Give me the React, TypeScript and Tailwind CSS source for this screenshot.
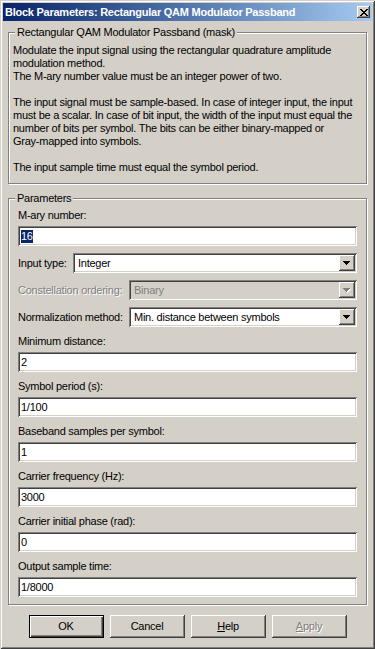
import React from "react";

const raised =
  "shadow-[inset_-1px_-1px_0_#404040,inset_1px_1px_0_#ffffff,inset_-2px_-2px_0_#808080,inset_2px_2px_0_#d4d0c8]";
const sunken =
  "shadow-[inset_1px_1px_0_#808080,inset_-1px_-1px_0_#ffffff,inset_2px_2px_0_#404040,inset_-2px_-2px_0_#d4d0c8]";
const etched = "border border-[#808080] shadow-[inset_1px_1px_0_#ffffff,1px_1px_0_#ffffff]";
const disabledText = "text-[#808080] [text-shadow:1px_1px_0_#ffffff]";

function Arrow({ disabled }: { disabled?: boolean }) {
  const fill = disabled ? "#808080" : "#000000";
  return (
    <svg width="8" height="5" viewBox="0 0 8 5" shapeRendering="crispEdges">
      {disabled && (
        <g fill="#ffffff">
          <rect x="1" y="1" width="7" height="1" />
          <rect x="2" y="2" width="5" height="1" />
          <rect x="3" y="3" width="3" height="1" />
          <rect x="4" y="4" width="1" height="1" />
        </g>
      )}
      <g fill={fill}>
        <rect x="0" y="0" width="7" height="1" />
        <rect x="1" y="1" width="5" height="1" />
        <rect x="2" y="2" width="3" height="1" />
        <rect x="3" y="3" width="1" height="1" />
      </g>
    </svg>
  );
}

function TextField({ value, selected }: { value: string; selected?: boolean }) {
  return (
    <div className={`mt-[4px] h-[20px] bg-white ${sunken} flex items-center pl-[3px]`}>
      {selected ? <span className="bg-[#0a246a] text-white">{value}</span> : <span>{value}</span>}
    </div>
  );
}

function Field({
  label,
  value,
  selected,
  first,
}: {
  label: string;
  value: string;
  selected?: boolean;
  first?: boolean;
}) {
  return (
    <div className={first ? "" : "mt-[7px]"}>
      <div className="h-[14px] flex items-center">{label}</div>
      <TextField value={value} selected={selected} />
    </div>
  );
}

function SelectRow({
  label,
  value,
  width,
  disabled,
}: {
  label: string;
  value: string;
  width: string;
  disabled?: boolean;
}) {
  return (
    <div className="mt-[7px] h-[20px] flex items-center">
      <span className={disabled ? disabledText : ""}>{label}</span>
      <div
        className={`ml-auto ${width} h-[20px] ${disabled ? "bg-[#d4d0c8]" : "bg-white"} ${sunken} flex items-center p-[2px]`}
      >
        <span className={`flex-1 pl-[3px] ${disabled ? "text-[#808080]" : ""}`}>{value}</span>
        <div className={`w-[16px] h-[16px] bg-[#d4d0c8] ${raised} flex items-center justify-center`}>
          <Arrow disabled={disabled} />
        </div>
      </div>
    </div>
  );
}

function Button({ label, def, disabled }: { label: React.ReactNode; def?: boolean; disabled?: boolean }) {
  return (
    <div
      className={`w-[75px] h-[23px] bg-[#d4d0c8] flex items-center justify-center ${
        def ? "border border-black shadow-[inset_1px_1px_0_#ffffff,inset_-1px_-1px_0_#404040,inset_-2px_-2px_0_#808080]" : raised
      } ${disabled ? disabledText : ""}`}
    >
      {label}
    </div>
  );
}

const description = [
  "Modulate the input signal using the rectangular quadrature amplitude",
  "modulation method.",
  "The M-ary number value must be an integer power of two.",
  "",
  "The input signal must be sample-based. In case of integer input, the input",
  "must be a scalar. In case of bit input, the width of the input must equal the",
  "number of bits per symbol. The bits can be either binary-mapped or",
  "Gray-mapped into symbols.",
  "",
  "The input sample time must equal the symbol period.",
];

export default function App() {
  return (
    <div
      className={`w-[375px] h-[649px] bg-[#d4d0c8] p-[3px] flex flex-col text-[11px] leading-[13px] tracking-[-0.25px] text-black font-['Liberation_Sans',Arial,sans-serif] shadow-[inset_1px_1px_0_#d4d0c8,inset_-1px_-1px_0_#404040,inset_2px_2px_0_#ffffff,inset_-2px_-2px_0_#808080]`}
    >
      {/* Title bar */}
      <div className="h-[18px] bg-linear-to-r from-[#0a246a] to-[#a6caf0] flex items-center pl-[2px] pr-[2px]">
        <span className="text-white font-bold text-[11px] tracking-[-0.25px] whitespace-nowrap">
          Block Parameters: Rectangular QAM Modulator Passband
        </span>
        <div className={`ml-auto w-[13px] h-[12px] bg-[#d4d0c8] ${raised} flex items-center justify-center`}>
          <svg width="8" height="7" viewBox="0 0 8 7" shapeRendering="crispEdges">
            <path d="M0 0h2v1H0zM6 0h2v1H6zM1 1h2v1H1zM5 1h2v1H5zM2 2h4v1H2zM3 3h2v1H3zM2 4h4v1H2zM1 5h2v1H1zM5 5h2v1H5zM0 6h2v1H0zM6 6h2v1H6z" fill="#000" />
          </svg>
        </div>
      </div>

      <div className="px-[5px] flex flex-col">
        {/* Description group */}
        <div className={`relative mt-[11px] ${etched} pt-[11px] pb-[9px] pl-[4px]`}>
          <span className="absolute -top-[7px] left-[6px] px-[2px] bg-[#d4d0c8]">
            Rectangular QAM Modulator Passband (mask)
          </span>
          {description.map((line, i) => (
            <div key={i} className="h-[13px] whitespace-nowrap">
              {line}
            </div>
          ))}
        </div>

        {/* Parameters group */}
        <div className={`relative mt-[14px] ${etched} pt-[9px] pb-[7px] px-[9px]`}>
          <span className="absolute -top-[7px] left-[6px] px-[2px] bg-[#d4d0c8]">Parameters</span>
          <Field label="M-ary number:" value="16" selected first />
          <SelectRow label="Input type:" value="Integer" width="w-[284px]" />
          <SelectRow label="Constellation ordering:" value="Binary" width="w-[228px]" disabled />
          <SelectRow label="Normalization method:" value="Min. distance between symbols" width="w-[228px]" />
          <Field label="Minimum distance:" value="2" />
          <Field label="Symbol period (s):" value="1/100" />
          <Field label="Baseband samples per symbol:" value="1" />
          <Field label="Carrier frequency (Hz):" value="3000" />
          <Field label="Carrier initial phase (rad):" value="0" />
          <Field label="Output sample time:" value="1/8000" />
        </div>

        {/* Buttons */}
        <div className="mt-[10px] flex justify-center gap-[6px]">
          <Button label="OK" def />
          <Button label="Cancel" />
          <Button
            label={
              <>
                <span className="underline">H</span>elp
              </>
            }
          />
          <Button
            label={
              <>
                <span className="underline">A</span>pply
              </>
            }
            disabled
          />
        </div>
      </div>
    </div>
  );
}
